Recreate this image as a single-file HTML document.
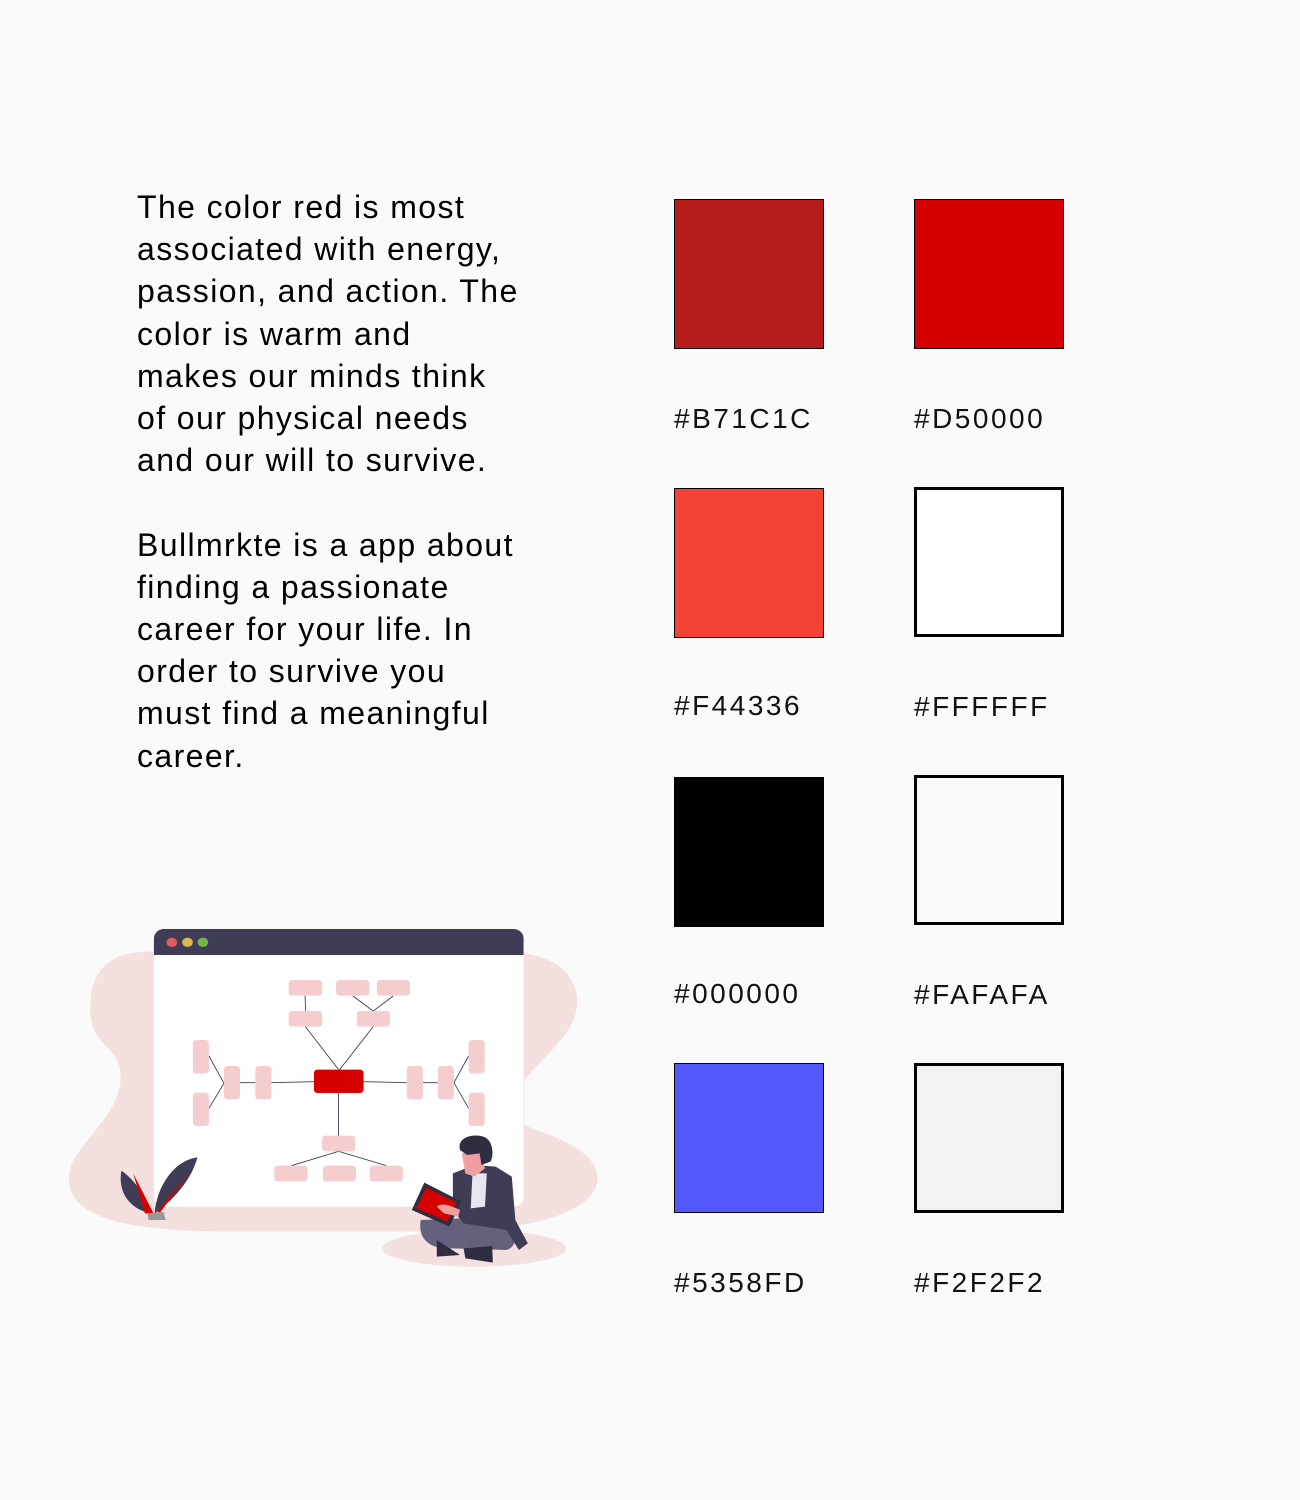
<!DOCTYPE html>
<html><head><meta charset="utf-8"><style>
body{margin:0;width:1300px;height:1500px;background:#FAFAFA;position:relative;overflow:hidden;font-family:"Liberation Sans",sans-serif}
.txt{position:absolute;left:137px;top:186px;font-size:32px;line-height:42.2px;color:#000;white-space:pre;letter-spacing:1.4px}
.sw{position:absolute;width:148px;height:148px;border:1px solid #000}
.sw.t{width:144px;height:144px;border:3px solid #000}
.lb{position:absolute;font-size:28px;color:#111;letter-spacing:2.5px}
</style></head><body>
<div class="txt">The color red is most
associated with energy,
passion, and action. The
color is warm and
makes our minds think
of our physical needs
and our will to survive.

Bullmrkte is a app about
finding a passionate
career for your life. In
order to survive you
must find a meaningful
career.</div>

<div class="sw" style="left:674px;top:199px;background:#B71C1C"></div>
<div class="sw" style="left:914px;top:199px;background:#D50000"></div>
<div class="lb" style="left:674px;top:403px">#B71C1C</div>
<div class="lb" style="left:914px;top:403px">#D50000</div>

<div class="sw" style="left:674px;top:488px;background:#F44336"></div>
<div class="sw t" style="left:914px;top:487px;background:#FFFFFF"></div>
<div class="lb" style="left:674px;top:690px">#F44336</div>
<div class="lb" style="left:914px;top:691px">#FFFFFF</div>

<div class="sw" style="left:674px;top:777px;background:#000"></div>
<div class="sw t" style="left:914px;top:775px;background:#FAFAFA"></div>
<div class="lb" style="left:674px;top:978px">#000000</div>
<div class="lb" style="left:914px;top:979px">#FAFAFA</div>

<div class="sw" style="left:674px;top:1063px;background:#5358FD"></div>
<div class="sw t" style="left:914px;top:1063px;background:#F2F2F2"></div>
<div class="lb" style="left:674px;top:1267px">#5358FD</div>
<div class="lb" style="left:914px;top:1267px">#F2F2F2</div>

<svg style="position:absolute;left:60px;top:920px" width="560" height="360" viewBox="0 0 1568 1080" preserveAspectRatio="none">
<path d="M250,95 C120,95 80,170 85,280 C90,380 170,380 170,470 C170,600 20,680 25,780 C30,900 200,935 500,935 L1100,935 C1300,930 1510,880 1505,770 C1500,680 1350,640 1300,615 L1300,480 C1380,380 1450,330 1448,240 C1445,150 1370,110 1300,100 Z" fill="#F5E0E0"/>
<ellipse cx="1160" cy="985" rx="258" ry="55" fill="#F5E0E0"/>
<rect x="263" y="27" width="1035" height="833" rx="28" fill="#fff"/>
<path d="M291,27 H1270 A28,28 0 0 1 1298,55 V105 H263 V55 A28,28 0 0 1 291,27Z" fill="#3F3D56"/>
<ellipse cx="313" cy="67" rx="15" ry="14" fill="#E05B5B"/><ellipse cx="357" cy="67" rx="15" ry="14" fill="#E0B44F"/><ellipse cx="400" cy="67" rx="15" ry="14" fill="#72B34A"/>
<g stroke="#3F3D56" stroke-width="2.5" fill="none">
<path d="M686,227L688,273M820,228L877,273M933,228L877,273M687,320L780,449M877,320L783,449M592,488L711,485M504,488L547,488M417,408L459,490L417,565M850,485L971,488M1016,488L1058,488M1144,408L1103,488L1144,565M780,519L780,647M648,737L780,694L914,737"/>
</g>
<g fill="#F5CDCF">
<rect x="640" y="180" width="94" height="47" rx="10"/><rect x="773" y="180" width="93" height="47" rx="10"/><rect x="887" y="180" width="93" height="47" rx="10"/>
<rect x="640" y="273" width="94" height="47" rx="10"/><rect x="831" y="273" width="93" height="47" rx="10"/>
<rect x="372" y="360" width="45" height="100" rx="10"/><rect x="372" y="518" width="45" height="100" rx="10"/><rect x="459" y="438" width="45" height="100" rx="10"/><rect x="547" y="438" width="45" height="100" rx="10"/>
<rect x="971" y="438" width="45" height="100" rx="10"/><rect x="1058" y="438" width="45" height="100" rx="10"/><rect x="1144" y="360" width="45" height="100" rx="10"/><rect x="1144" y="518" width="45" height="100" rx="10"/>
<rect x="734" y="647" width="93" height="47" rx="10"/><rect x="600" y="737" width="93" height="47" rx="10"/><rect x="736" y="737" width="93" height="47" rx="10"/><rect x="867" y="737" width="93" height="47" rx="10"/>
</g>
<rect x="711" y="449" width="139" height="70" rx="10" fill="#D50000"/>
<path d="M172,752 C160,820 200,870 255,880 C240,830 210,780 172,752Z" fill="#3F3D56"/>
<path d="M205,760 L262,880 L238,880 Z" fill="#D50000"/>
<path d="M385,712 C320,720 270,800 265,880 C330,830 370,770 385,712Z" fill="#3F3D56"/>
<path d="M370,748 L272,875 L280,878 Z" fill="#D50000"/>
<path d="M245,880 L290,876 L296,900 L248,900Z" fill="#999"/>
<path d="M1010,900 C1000,960 1040,990 1100,985 L1250,990 C1290,980 1280,900 1240,890 Z" fill="#65617D"/>
<path d="M1055,960 L1055,1010 L1120,1005 Z" fill="#2F2E41"/>
<path d="M1130,985 L1210,978 L1212,1028 L1135,1015Z" fill="#2F2E41"/>
<path d="M1100,760 L1160,735 L1220,740 L1265,770 L1275,900 L1310,970 L1285,990 L1250,930 L1130,910 L1100,870Z" fill="#3F3D56"/>
<path d="M1155,760 L1195,760 L1190,860 L1150,865Z" fill="#E6E6EE"/>
<path d="M1125,700 L1175,695 L1190,745 L1160,770 L1135,760Z" fill="#F09EA0"/>
<path d="M1120,690 C1110,650 1160,640 1185,650 C1215,660 1215,710 1205,725 L1180,735 L1175,700 L1140,705 Z" fill="#2F2E41"/>
<path d="M985,870 L1020,788 L1125,845 L1090,920Z" fill="#2F2E41"/>
<path d="M998,865 L1025,802 L1110,848 L1085,905Z" fill="#D50000"/>
<path d="M1055,860 C1070,845 1100,860 1120,870 L1115,890 L1075,880Z" fill="#F09EA0"/>
</svg>
</body></html>
